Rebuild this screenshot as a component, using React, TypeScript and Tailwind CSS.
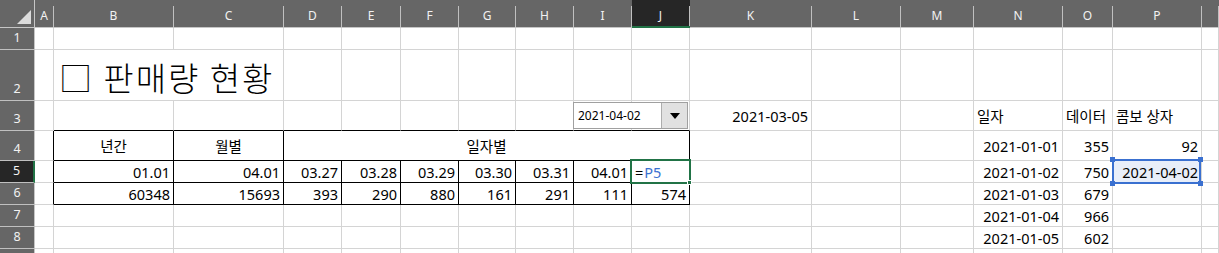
import React from 'react';

const COLS = ['A', 'B', 'C', 'D', 'E', 'F', 'G', 'H', 'I', 'J', 'K', 'L', 'M', 'N', 'O', 'P', 'Q'];
const ROWS = [1, 2, 3, 4, 5, 6, 7, 8, 9];

type Cell = { text?: React.ReactNode; align?: 'l' | 'r' | 'c'; span?: number; kind?: 'title' | 'formula' | 'pick' };

const DATA: Record<string, Cell> = {
  B2: { text: '□ 판매량 현황', span: 2, kind: 'title' },
  K3: { text: '2021-03-05', align: 'r' },
  N3: { text: '일자', align: 'l' },
  O3: { text: '데이터', align: 'l' },
  P3: { text: '콤보 상자', align: 'l' },
  B4: { text: '년간', align: 'c' },
  C4: { text: '월별', align: 'c' },
  D4: { text: '일자별', align: 'c', span: 7 },
  B5: { text: '01.01', align: 'r' },
  C5: { text: '04.01', align: 'r' },
  D5: { text: '03.27', align: 'r' },
  E5: { text: '03.28', align: 'r' },
  F5: { text: '03.29', align: 'r' },
  G5: { text: '03.30', align: 'r' },
  H5: { text: '03.31', align: 'r' },
  I5: { text: '04.01', align: 'r' },
  J5: { kind: 'formula' },
  B6: { text: '60348', align: 'r' },
  C6: { text: '15693', align: 'r' },
  D6: { text: '393', align: 'r' },
  E6: { text: '290', align: 'r' },
  F6: { text: '880', align: 'r' },
  G6: { text: '161', align: 'r' },
  H6: { text: '291', align: 'r' },
  I6: { text: '111', align: 'r' },
  J6: { text: '574', align: 'r' },
  N4: { text: '2021-01-01', align: 'r' },
  N5: { text: '2021-01-02', align: 'r' },
  N6: { text: '2021-01-03', align: 'r' },
  N7: { text: '2021-01-04', align: 'r' },
  N8: { text: '2021-01-05', align: 'r' },
  O4: { text: '355', align: 'r' },
  O5: { text: '750', align: 'r' },
  O6: { text: '679', align: 'r' },
  O7: { text: '966', align: 'r' },
  O8: { text: '602', align: 'r' },
  P4: { text: '92', align: 'r' },
  P5: { text: '2021-04-02', align: 'r', kind: 'pick' },
};

function ColHeader({ letter }: { letter: string }) {
  const sel = letter === 'J';
  return (
    <div
      className={
        sel
          ? 'bg-[#262626] pt-[6px] border-b-2 border-b-[#217346]'
          : 'bg-[#666666] pt-[6px] border-b border-b-[#c6c6c6]'
      }
    >
      <div className="h-full border-r border-r-[#c0c0c0] flex items-start justify-center pt-[2px] text-[12px] leading-[16px] text-[#f2f2f2] font-['Noto_Sans',sans-serif]">
        {letter === 'Q' ? '' : letter}
      </div>
    </div>
  );
}

function RowHeader({ n }: { n: number }) {
  const sel = n === 5;
  return (
    <div
      className={
        sel
          ? 'bg-[#262626] border-b border-b-[#c0c0c0] border-r-2 border-r-[#217346] flex items-end justify-center pb-[3px] text-[12.5px] leading-[16px] text-[#f2f2f2] font-[\'Noto_Sans\',sans-serif]'
          : 'bg-[#666666] border-b border-b-[#c0c0c0] border-r border-r-[#c6c6c6] flex items-end justify-center pb-[3px] text-[12.5px] leading-[16px] text-[#f2f2f2] font-[\'Noto_Sans\',sans-serif]'
      }
    >
      {n === 9 ? '' : n}
    </div>
  );
}

function DataCell({ col, row }: { col: number; row: number }) {
  const key = COLS[col] + row;
  const cell = DATA[key];
  const span = cell?.span ?? 1;
  const lastCol = col + span - 1;
  const inTable = row >= 4 && row <= 6;
  const rightBlack = inTable && lastCol <= 9;
  const bottomBlack = row >= 3 && row <= 6 && col >= 1 && col <= 9;

  const border =
    (rightBlack ? 'border-r border-r-black ' : 'border-r border-r-[#d4d4d4] ') +
    (bottomBlack ? 'border-b border-b-black' : 'border-b border-b-[#d4d4d4]');

  const spanCls = span === 7 ? 'col-span-7' : span === 2 ? 'col-span-2' : '';
  const align =
    cell?.align === 'r' ? 'justify-end pr-[3px]' : cell?.align === 'c' ? 'justify-center' : 'justify-start pl-[3px]';

  if (cell?.kind === 'title') {
    return (
      <div className={`${border} ${spanCls} flex items-center pl-[5px] pt-[3px] whitespace-nowrap`}>
        <span className="text-[33px] leading-[40px] tracking-[2px] font-light text-black font-['Noto_Sans_CJK_KR',sans-serif]">□ 판매량 현황</span>
      </div>
    );
  }

  if (cell?.kind === 'formula') {
    return (
      <div className={`${border} relative flex items-center pl-[3px] text-[14.5px] leading-[20px]`}>
        <span className="text-black pr-[1px]">=</span>
        <span className="text-[#3a70d0]">P5</span>
        <div className="absolute left-[-2px] top-[-2px] w-[61px] h-[25px] border-2 border-[#217346]">
          <div className="absolute right-[-3px] bottom-[-3px] w-[5px] h-[5px] bg-[#217346] border border-white" />
        </div>
      </div>
    );
  }

  if (cell?.kind === 'pick') {
    return (
      <div className={`${border} relative flex items-center ${align} text-[14.5px] leading-[20px] text-black`}>
        <div className="absolute left-[-1px] top-[-2px] w-[89px] h-[25px] border-2 border-[#3a70d0] bg-[#e8eef9]">
          <div className="absolute left-[-4px] top-[-4px] w-[5px] h-[5px] bg-[#3a70d0]" />
          <div className="absolute right-[-4px] top-[-4px] w-[5px] h-[5px] bg-[#3a70d0]" />
          <div className="absolute left-[-4px] bottom-[-4px] w-[5px] h-[5px] bg-[#3a70d0]" />
          <div className="absolute right-[-4px] bottom-[-4px] w-[5px] h-[5px] bg-[#3a70d0]" />
        </div>
        <span className="relative">{cell.text}</span>
      </div>
    );
  }

  return (
    <div className={`${border} ${spanCls} flex items-center ${align} whitespace-nowrap text-[14.5px] leading-[20px] text-black`}>
      {cell?.text}
    </div>
  );
}

export default function App() {
  const rows: React.ReactNode[] = [];
  rows.push(
    <div key="corner" className="bg-[#666666] border-b border-b-[#c6c6c6] border-r border-r-[#c6c6c6] flex items-start">
      <svg width="34" height="27" viewBox="0 0 34 27" className="block">
        <polygon points="31,10 31,24 17,24" fill="#dcdcdc" />
      </svg>
    </div>
  );
  COLS.forEach((c) => rows.push(<ColHeader key={'h' + c} letter={c} />));

  ROWS.forEach((r) => {
    rows.push(<RowHeader key={'r' + r} n={r} />);
    let ci = 0;
    while (ci < COLS.length) {
      const cell = DATA[COLS[ci] + r];
      rows.push(<DataCell key={COLS[ci] + r} col={ci} row={r} />);
      ci += cell?.span ?? 1;
    }
  });

  return (
    <div className="w-[1219px] h-[253px] overflow-hidden bg-white relative font-['Noto_Sans','Noto_Sans_CJK_KR',sans-serif]">
      <div className="grid grid-cols-[35px_19px_120px_110px_58px_59px_58px_57px_58px_58px_58px_122px_89px_73px_89px_50px_89px_17px] grid-rows-[28px_22px_51px_30px_30px_22px_22px_22px_22px_22px]">
        {rows}
      </div>
      <div className="absolute left-[573px] top-[102px] w-[115px] h-[27px] border border-[#a0a0a0] bg-white flex items-center">
        <span className="flex-1 pl-[4px] text-[12px] leading-[16px] text-black">2021-04-02</span>
        <div className="w-[26px] h-[25px] bg-[#e1e1e1] border-l border-[#adadad] flex items-center justify-center">
          <svg width="10" height="6" viewBox="0 0 10 6">
            <polygon points="0,0 10,0 5,6" fill="#000" />
          </svg>
        </div>
      </div>
    </div>
  );
}
